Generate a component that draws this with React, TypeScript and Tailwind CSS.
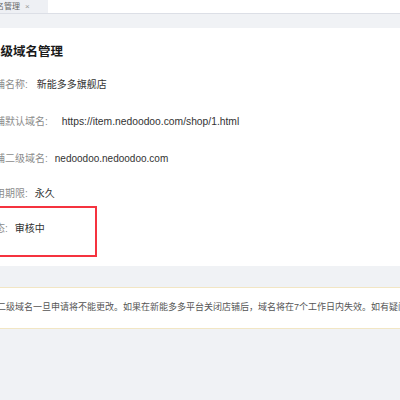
import React from 'react';

const rows = [
  { label: '店铺名称:', value: '新能多多旗舰店', gap: 'ml-[9px]', h: 'h-[37px]', cls: 'text-[10px]' },
  { label: '店铺默认域名:', value: 'https://item.nedoodoo.com/shop/1.html', gap: 'ml-[14px]', h: 'h-[37px]', cls: 'text-[10.3px] text-[#222]' },
  { label: '店铺二级域名:', value: 'nedoodoo.nedoodoo.com', gap: 'ml-[7px]', h: 'h-[36px]', cls: 'text-[10px]' },
  { label: '使用期限:', value: '永久', gap: 'ml-[7px]', h: 'h-[35px]', cls: 'text-[10px]' },
  { label: '状态:', value: '审核中', gap: 'ml-[7px]', h: 'h-[35px]', cls: 'text-[10px]' },
];

const App = () => {
  return (
    <div className="relative h-[400px] w-[400px] overflow-hidden bg-[#f0f2f5] font-['Liberation_Sans','Noto_Sans_CJK_SC',sans-serif]">
      {/* tab bar */}
      <div className="flex h-[14px] border-b border-[#dcdfe6] bg-white">
        <div className="-ml-[34px] flex h-[13px] items-center gap-[5px] bg-[#eef0f4] pl-[6px] pr-[18px]">
          <span className="text-[8px] leading-none text-[#666]">二级域名管理</span>
          <span className="text-[8px] leading-none text-[#999]">×</span>
        </div>
      </div>

      <div className="pt-[14px]">
        {/* card */}
        <div className="relative -mx-[40px] h-[238px] bg-white pl-[25px]">
          <div className="ml-[3px] pt-[16px] text-[12.5px] font-bold leading-[16px] text-[#1a1a1a]">
            二级域名管理
          </div>
          <div className="mt-[6px] flex flex-col">
            {rows.map((r) => (
              <div key={r.label} className={`flex items-center whitespace-nowrap ${r.h}`}>
                <span className="text-[10px] text-[#8c8c8c]">{r.label}</span>
                <span className={`${r.gap} ${r.cls} text-[#333]`}>{r.value}</span>
              </div>
            ))}
          </div>
          <div className="absolute left-[10px] top-[178px] h-[51px] w-[127px] border-2 border-[#f5333f]" />
        </div>

        {/* notice */}
        <div className="-mx-[40px] mt-[21px] flex h-[42px] items-center border border-[#f2e6c4] bg-white pl-[18px]">
          <span className="whitespace-nowrap text-[9px] text-[#555]">
            店铺二级域名一旦申请将不能更改。如果在新能多多平台关闭店铺后，域名将在7个工作日内失效。如有疑问请联系客服。
          </span>
        </div>
      </div>
    </div>
  );
};

export default App;
